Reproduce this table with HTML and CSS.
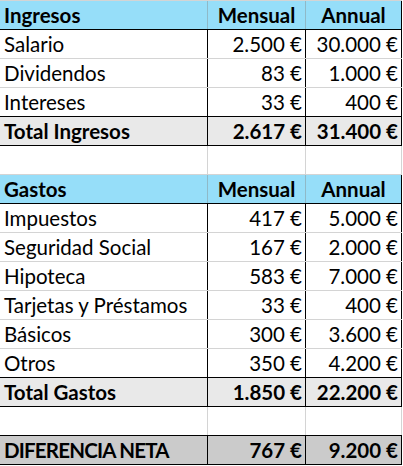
FILE: index.html
```html
<!DOCTYPE html>
<html lang="es">
<head>
<meta charset="utf-8">
<title>Presupuesto</title>
<link rel="stylesheet" href="styles.css">
</head>
<body>
<div class="sheet">
  <div class="row hd"><div class="c l">Ingresos</div><div class="c m">Mensual</div><div class="c m last">Annual</div></div>
  <div class="row data"><div class="c l">Salario</div><div class="c r">2.500 €</div><div class="c r">30.000 €</div></div>
  <div class="row data"><div class="c l">Dividendos</div><div class="c r">83 €</div><div class="c r">1.000 €</div></div>
  <div class="row data end"><div class="c l">Intereses</div><div class="c r">33 €</div><div class="c r">400 €</div></div>
  <div class="row total"><div class="c l">Total Ingresos</div><div class="c r">2.617 €</div><div class="c r">31.400 €</div></div>
  <div class="row blank"><div class="c"></div><div class="c"></div><div class="c"></div></div>
  <div class="row hd"><div class="c l">Gastos</div><div class="c m">Mensual</div><div class="c m last">Annual</div></div>
  <div class="row data"><div class="c l">Impuestos</div><div class="c r">417 €</div><div class="c r">5.000 €</div></div>
  <div class="row data"><div class="c l">Seguridad Social</div><div class="c r">167 €</div><div class="c r">2.000 €</div></div>
  <div class="row data"><div class="c l">Hipoteca</div><div class="c r">583 €</div><div class="c r">7.000 €</div></div>
  <div class="row data"><div class="c l">Tarjetas y Préstamos</div><div class="c r">33 €</div><div class="c r">400 €</div></div>
  <div class="row data"><div class="c l">Básicos</div><div class="c r">300 €</div><div class="c r">3.600 €</div></div>
  <div class="row data end"><div class="c l">Otros</div><div class="c r">350 €</div><div class="c r">4.200 €</div></div>
  <div class="row total"><div class="c l">Total Gastos</div><div class="c r">1.850 €</div><div class="c r">22.200 €</div></div>
  <div class="row blank end"><div class="c"></div><div class="c"></div><div class="c"></div></div>
  <div class="row net"><div class="c l caps">DIFERENCIA NETA</div><div class="c r">767 €</div><div class="c r">9.200 €</div></div>
</div>
</body>
</html>
```

FILE: styles.css
```css
html, body {
  margin: 0;
  padding: 0;
  background: #ffffff;
}

.sheet {
  width: 402px;
  border-top: 1px solid #d4d4d4;
  font-family: Lato, "Liberation Sans", sans-serif;
  font-size: 20.5px;
  color: #000;
}

.row {
  display: grid;
  grid-template-columns: 208px 98px 96px;
  height: 29px;
  box-sizing: border-box;
  border-bottom: 1px solid #d4d4d4;
}

.c {
  box-sizing: border-box;
  height: 28px;
  line-height: 28px;
  border-right: 1px solid #000;
  white-space: nowrap;
  overflow: hidden;
}

.l { padding-left: 4px; text-align: left; }
.r { padding-right: 3px; text-align: right; }
.m { text-align: center; }
.caps { letter-spacing: -0.8px; }

.hd {
  background: #96def9;
  font-weight: bold;
  border-bottom-color: #000;
}
.hd .c { border-right-color: #8fb9c8; }
.hd .c.last { border-right-color: #000; }

.data.end { border-bottom-color: #000; }

.total {
  background: #e9e9e9;
  font-weight: bold;
  border-bottom-color: #000;
}

.blank .c { border-right-color: #d4d4d4; }
.blank.end { border-bottom-color: #000; }

.net {
  background: #cbcbcb;
  font-weight: bold;
  border-bottom-color: #000;
}
```
